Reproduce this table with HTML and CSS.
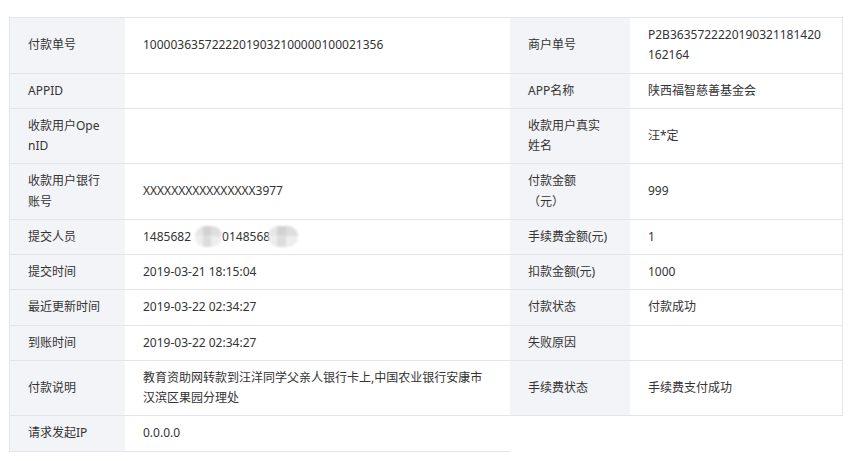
FILE: index.html
```html
<!DOCTYPE html>
<html lang="zh-CN">
<head>
<meta charset="utf-8">
<title>付款详情</title>
<link rel="stylesheet" href="styles.css">
</head>
<body>
<div class="detail">
  <div class="cell label">付款单号</div>
  <div class="cell value">10000363572222019032100000100021356</div>
  <div class="cell label">商户单号</div>
  <div class="cell value last">P2B3635722220190321181420162164</div>

  <div class="cell label">APPID</div>
  <div class="cell value"></div>
  <div class="cell label">APP名称</div>
  <div class="cell value last">陕西福智慈善基金会</div>

  <div class="cell label">收款用户OpenID</div>
  <div class="cell value"></div>
  <div class="cell label">收款用户真实姓名</div>
  <div class="cell value last">汪*定</div>

  <div class="cell label">收款用户银行账号</div>
  <div class="cell value">XXXXXXXXXXXXXXXX3977</div>
  <div class="cell label">付款金额（元）</div>
  <div class="cell value last">999</div>

  <div class="cell label">提交人员</div>
  <div class="cell value"><span>1485682<span class="mask m1"></span>0148568<span class="mask m2"></span></span></div>
  <div class="cell label">手续费金额(元)</div>
  <div class="cell value last">1</div>

  <div class="cell label">提交时间</div>
  <div class="cell value">2019-03-21 18:15:04</div>
  <div class="cell label">扣款金额(元)</div>
  <div class="cell value last">1000</div>

  <div class="cell label">最近更新时间</div>
  <div class="cell value">2019-03-22 02:34:27</div>
  <div class="cell label">付款状态</div>
  <div class="cell value last">付款成功</div>

  <div class="cell label">到账时间</div>
  <div class="cell value">2019-03-22 02:34:27</div>
  <div class="cell label">失败原因</div>
  <div class="cell value last"></div>

  <div class="cell label">付款说明</div>
  <div class="cell value">教育资助网转款到汪洋同学父亲人银行卡上,中国农业银行安康市汉滨区果园分理处</div>
  <div class="cell label">手续费状态</div>
  <div class="cell value last">手续费支付成功</div>

  <div class="cell label">请求发起IP</div>
  <div class="cell value">0.0.0.0</div>
</div>
</body>
</html>
```

FILE: styles.css
```css
html, body {
  margin: 0;
  padding: 0;
  background: #ffffff;
}

body {
  padding: 17px 10px 0 9px;
  font-family: "Noto Sans", "Noto Sans CJK SC", sans-serif;
  font-size: 12px;
  color: #333333;
}

.detail {
  display: grid;
  grid-template-columns: 116px 385px 120px 213px;
  width: 834px;
}

.cell {
  box-sizing: border-box;
  display: flex;
  align-items: center;
  padding: 7px 20px 7px 18px;
  line-height: 20.25px;
  min-height: 34px;
  border-bottom: 1px solid #e4e5ea;
  word-break: break-all;
  text-spacing-trim: space-all;
}

.cell > span {
  display: block;
}

.detail > .cell:nth-child(-n+4) {
  border-top: 1px solid #e4e5ea;
}

.detail > .cell:nth-child(4n+1) {
  border-left: 1px solid #e4e5ea;
}

.label {
  background: #f3f4f8;
}

.value {
  background: #ffffff;
}

.value.last {
  border-right: 1px solid #e4e5ea;
  padding-right: 16px;
}

.mask {
  display: inline-block;
  vertical-align: middle;
  height: 21px;
  border-radius: 10px;
  filter: blur(0.8px);
  background:
    linear-gradient(90deg, #e6e6e6 0 30%, #d2d2d2 30% 60%, #dedede 60% 100%) top / 100% 50% no-repeat,
    linear-gradient(90deg, #ededed 0 30%, #dcdcdc 30% 60%, #eeeeee 60% 100%) bottom / 100% 50% no-repeat;
}

.m1 {
  width: 27px;
  margin: -2px 0 0 4px;
}

.m2 {
  width: 30px;
  margin: -2px 0 0 -2px;
}
```
